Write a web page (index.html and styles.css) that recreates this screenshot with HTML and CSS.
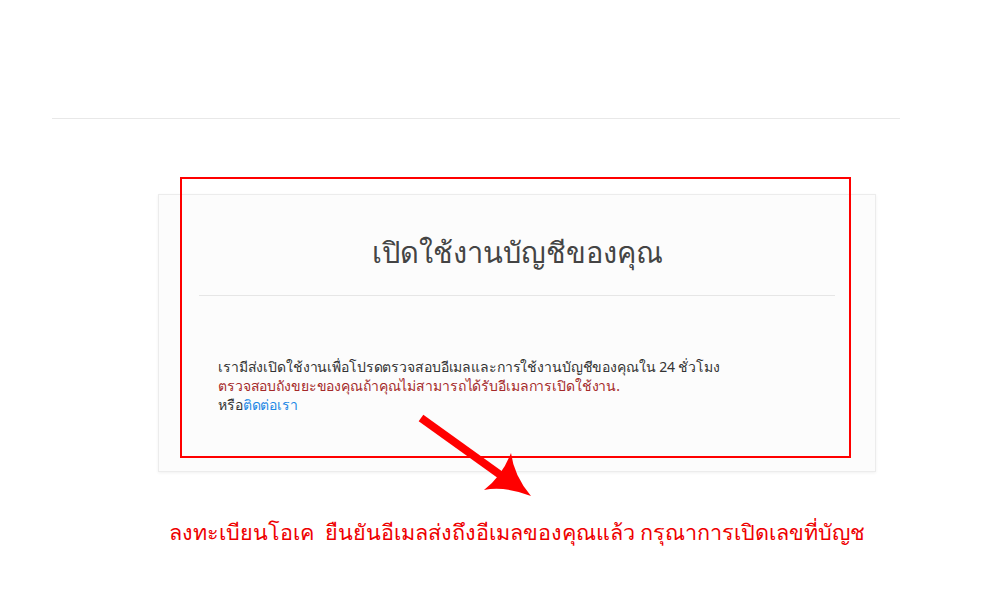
FILE: index.html
```html
<!DOCTYPE html>
<html lang="th">
<head>
  <meta charset="UTF-8">
  <meta name="viewport" content="width=device-width, initial-scale=1.0">
  <title>เปิดใช้งานบัญชีของคุณ</title>
  <link rel="stylesheet" href="styles.css">
</head>
<body>
  <div class="page-header"></div>

  <div class="activate-wrap">
    <div class="activate-card">
      <h1 class="card-title">เปิดใช้งานบัญชีของคุณ</h1>
      <div class="card-body">
        <p>เรามีส่งเปิดใช้งานเพื่อโปรดตรวจสอบอีเมลและการใช้งานบัญชีของคุณใน 24 ชั่วโมง<br>
        <span class="note">ตรวจสอบถังขยะของคุณถ้าคุณไม่สามารถได้รับอีเมลการเปิดใช้งาน.</span><br>
        หรือ<a href="#">ติดต่อเรา</a></p>
      </div>
    </div>

    <p class="caption">ลงทะเบียนโอเค&nbsp; ยืนยันอีเมลส่งถึงอีเมลของคุณแล้ว กรุณาการเปิดเลขที่บัญช</p>

    <!-- annotation overlay -->
    <div class="mark-box"></div>
    <svg class="mark-arrow" viewBox="0 0 130 100" xmlns="http://www.w3.org/2000/svg">
      <line x1="4" y1="4" x2="96" y2="70" stroke="#ff0000" stroke-width="8"/>
      <path d="M94 39 Q97 62 114 82 Q88 72 67 76 Q85 62 94 39z" fill="#ff0000"/>
    </svg>
  </div>
</body>
</html>
```

FILE: styles.css
```css
* {
  margin: 0;
  padding: 0;
  box-sizing: border-box;
}

body {
  font-family: Tahoma, "Noto Sans", "Liberation Sans", sans-serif;
  background-color: #ffffff;
  color: #333333;
}

.page-header {
  height: 119px;
  margin: 0 90px 0 52px;
  border-bottom: 1px solid #e8e8e8;
}

.activate-wrap {
  position: relative;
  width: 718px;
  margin: 75px 0 0 158px;
}

.activate-card {
  height: 278px;
  background-color: #fcfcfc;
  border: 1px solid #ececec;
  box-shadow: 0 1px 3px rgba(0, 0, 0, 0.06);
  padding: 0 40px;
}

.card-title {
  font-size: 29px;
  font-weight: 400;
  color: #444444;
  text-align: center;
  padding: 35px 0 19px;
  border-bottom: 1px solid #e6e6e6;
}

.card-body {
  padding: 61px 19px 0;
}

.card-body p {
  font-size: 14px;
  letter-spacing: -0.12px;
  line-height: 19px;
  color: #333333;
}

.note {
  color: #a52a2a;
}

.card-body a {
  color: #1e88e5;
  text-decoration: none;
}

.caption {
  margin-top: 43px;
  text-align: center;
  font-size: 21.6px;
  color: #ee0000;
}

.mark-box {
  position: absolute;
  left: 22px;
  top: -17px;
  width: 671px;
  height: 281px;
  border: 2.5px solid #ff0000;
}

.mark-arrow {
  position: absolute;
  left: 259px;
  top: 220px;
  width: 130px;
  height: 100px;
}
```
